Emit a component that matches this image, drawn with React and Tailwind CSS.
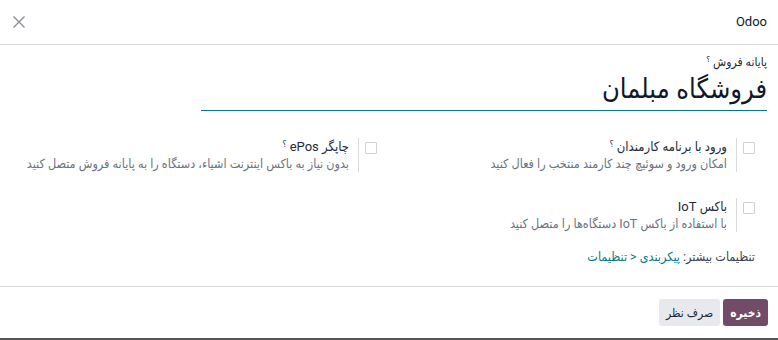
import React from 'react';

const font = { fontFamily: 'Roboto, "DejaVu Sans Condensed", "DejaVu Sans", sans-serif' };

function Setting({ title, help, desc, h }) {
    return (
        <div className={`flex items-start ${h}`}>
            <div className="pr-[12px] pl-[6px] pt-[4px]">
                <div className="w-[12px] h-[12px] border border-[#ced2d6] rounded-[1px] bg-white"></div>
            </div>
            <div className="border-r border-[#d8dadd] pr-[9px] h-[34px]">
                <div className="text-[13px] leading-[17px] text-[#1f2937] whitespace-nowrap">
                    {title}
                    {help && <sup className="text-[9px] text-[#374151] mr-[3px]">؟</sup>}
                </div>
                <div className="text-[12.5px] leading-[18px] text-[#6b7280] whitespace-nowrap">{desc}</div>
            </div>
        </div>
    );
}

export default function App() {
    return (
        <div dir="rtl" className="w-[778px] h-[340px] bg-white flex flex-col overflow-hidden" style={font}>
            <div className="h-[45px] shrink-0 flex items-center justify-between px-[11px] border-b border-[#d8dadd]">
                <span className="text-[13px] text-[#111827]" dir="ltr">Odoo</span>
                <svg width="14" height="14" viewBox="0 0 14 14" className="ml-[1px]">
                    <path d="M1.5 1.5 L12.5 12.5 M12.5 1.5 L1.5 12.5" stroke="#8a8f96" strokeWidth="1.4" fill="none" />
                </svg>
            </div>

            <div className="px-[11px] pt-[9px]">
                <div className="text-[12px] leading-[16px] text-[#1f2937]">
                    پایانه فروش<sup className="text-[8px] mr-[3px]">؟</sup>
                </div>
                <div className="w-[566px] border-b-[1.5px] border-[#017e84] text-[27px] leading-[38px] text-[#111827] pb-[2px]">
                    فروشگاه مبلمان
                </div>

                <div className="grid grid-cols-2 mt-[27px]">
                    <Setting h="h-[60px]" title="ورود با برنامه کارمندان" help desc="امکان ورود و سوئیچ چند کارمند منتخب را فعال کنید" />
                    <Setting h="h-[60px]" title="چاپگر ePos" help desc="بدون نیاز به باکس اینترنت اشیاء، دستگاه را به پایانه فروش متصل کنید" />
                    <Setting h="h-[50px]" title="باکس IoT" desc="با استفاده از باکس IoT دستگاه‌ها را متصل کنید" />
                    <div></div>
                </div>

                <div className="pr-[12px] text-[12.5px] leading-[18px] text-[#374151]">
                    تنظیمات بیشتر: <span className="text-[#017e84]">پیکربندی &lt; تنظیمات</span>
                </div>
            </div>

            <div className="mt-[20px] border-t border-[#d8dadd] flex gap-[3px] px-[10px] pt-[12px] flex-1">
                <button className="h-[27px] px-[7px] rounded-[3px] bg-[#714b67] text-white text-[12px] font-bold">ذخیره</button>
                <button className="h-[27px] px-[7px] rounded-[3px] bg-[#e7e9ed] text-[#1f2937] text-[12px]">صرف نظر</button>
            </div>
            <div className="h-[2px] shrink-0 bg-[#555]"></div>
        </div>
    );
}
